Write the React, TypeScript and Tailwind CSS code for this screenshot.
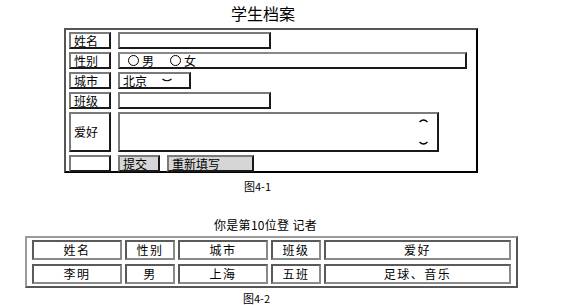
import React from "react";

const font = { fontFamily: '"Noto Sans CJK SC", "Liberation Sans", sans-serif' };

// inset-looking boxes, like an old table/input border
const box = "border-2 border-t-[#7a7a7a] border-l-[#7a7a7a] border-r-[#1a1a1a] border-b-[#1a1a1a]";

function Radio({ label }: { label: string }) {
  return (
    <span className="flex items-center gap-[3px]">
      <span className="w-[11px] h-[11px] rounded-full border border-black inline-block" />
      <span>{label}</span>
    </span>
  );
}

function Label({ children, tall }: { children: React.ReactNode; tall?: boolean }) {
  return (
    <div className={`${box} bg-white w-[42px] ${tall ? "h-[40px]" : "h-[17px]"} flex items-center pl-[3px] shrink-0`}>
      {children}
    </div>
  );
}

export default function App() {
  const head = ["姓名", "性别", "城市", "班级", "爱好"];
  const row = ["李明", "男", "上海", "五班", "足球、音乐"];

  return (
    <div className="w-[565px] h-[305px] bg-white text-black text-[12px] leading-none overflow-hidden" style={font}>
      <div className="pt-[4px] ml-[231px] h-[28px] text-[16px] leading-[18px]">学生档案</div>

      {/* 图4-1 form */}
      <div className="ml-[64px] w-[414px] h-[145px] border-2 border-t-[#555] border-l-[#555] border-r-black border-b-black pt-[2px] pl-[3px] flex flex-col gap-[3px]">
        <div className="flex gap-[7px]">
          <Label>姓名</Label>
          <div className={`${box} bg-white w-[153px] h-[17px]`} />
        </div>
        <div className="flex gap-[7px]">
          <Label>性别</Label>
          <div className={`${box} bg-white w-[349px] h-[17px] flex items-center pl-[8px] gap-[16px] border-t-[#888]`}>
            <Radio label="男" />
            <Radio label="女" />
          </div>
        </div>
        <div className="flex gap-[7px]">
          <Label>城市</Label>
          <div className={`${box} bg-white w-[73px] h-[17px] flex items-center pl-[3px]`}>
            <span>北京</span>
            <svg width="10" height="5" viewBox="0 0 10 5" className="ml-[15px]">
              <path d="M0.5 1 Q5 4.5 9.5 1" stroke="black" strokeWidth="1.2" fill="none" />
            </svg>
          </div>
        </div>
        <div className="flex gap-[7px]">
          <Label>班级</Label>
          <div className={`${box} bg-white w-[153px] h-[17px]`} />
        </div>
        <div className="flex gap-[7px]">
          <Label tall>爱好</Label>
          <div className={`${box} bg-white w-[321px] h-[40px] flex flex-col items-end justify-between pr-[9px] py-[4px]`}>
            <svg width="9" height="5" viewBox="0 0 9 5">
              <path d="M0.5 4 Q4.5 0 8.5 4" stroke="black" strokeWidth="1.2" fill="none" />
            </svg>
            <svg width="9" height="5" viewBox="0 0 9 5">
              <path d="M0.5 1 Q4.5 5 8.5 1" stroke="black" strokeWidth="1.2" fill="none" />
            </svg>
          </div>
        </div>
        <div className="flex gap-[7px]">
          <div className={`${box} bg-white w-[42px] h-[17px]`} />
          <div className="flex gap-[7px]">
            <div className={`${box} bg-[#d6d6d6] w-[42px] h-[17px] flex items-center pl-[3px]`}>提交</div>
            <div className={`${box} bg-[#d6d6d6] w-[87px] h-[17px] flex items-center pl-[3px]`}>重新填写</div>
          </div>
        </div>
      </div>

      <div className="ml-[244px] mt-[8px] text-[11px]">图4-1</div>

      <div className="ml-[214px] mt-[27px] text-[12px] tracking-[0.3px]">你是第10位登 记者</div>

      {/* 图4-2 table */}
      <div className="ml-[25px] mt-[5px] w-[493px] h-[52px] border-2 border-t-[#9a9a9a] border-l-[#9a9a9a] border-r-[#555] border-b-[#555] pl-[5px] pt-[2px]">
        <div className="grid grid-cols-[90px_50px_90px_50px_187px] gap-x-[3px] gap-y-[4px]">
          {[...head, ...row].map((t, i) => (
            <div
              key={i}
              className="h-[20px] border-2 border-t-[#5a5a5a] border-l-[#5a5a5a] border-r-[#8a8a8a] border-b-[#8a8a8a] flex items-center justify-center text-[12px] tracking-[1.5px]"
            >
              {t}
            </div>
          ))}
        </div>
      </div>

      <div className="ml-[243px] mt-[5px] text-[11px]">图4-2</div>
    </div>
  );
}
